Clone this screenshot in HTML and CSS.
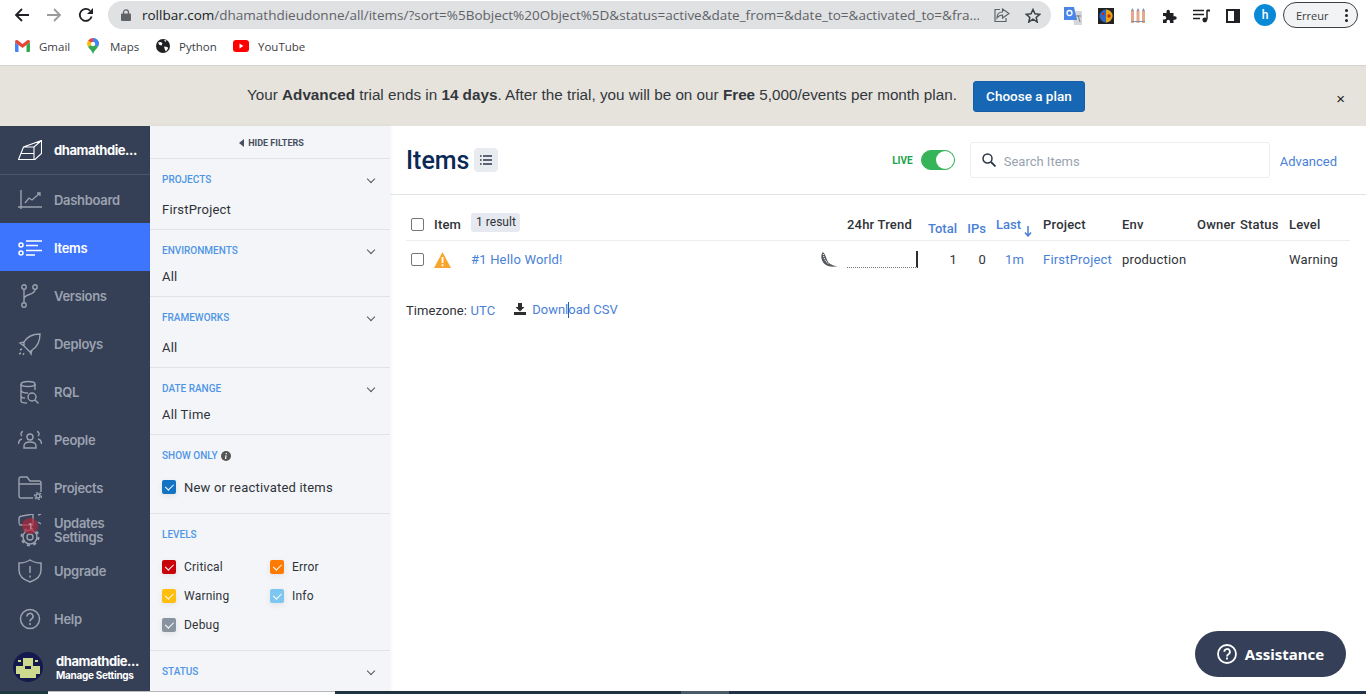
FILE: index.html
```html
<!DOCTYPE html>
<html>
<head>
    <title>Items - Rollbar</title>
    <link rel="stylesheet" href="styles.css">
</head>
<body>
    <!-- Browser toolbar -->
    <div class="toolbar">
        <svg class="nav-arrow" width="16" height="16" viewBox="0 0 16 16"><path d="M15 8H2M8 2 2 8l6 6" fill="none" stroke="#202124" stroke-width="1.8"/></svg>
        <svg class="nav-arrow" width="16" height="16" viewBox="0 0 16 16"><path d="M1 8h13M8 2l6 6-6 6" fill="none" stroke="#9a9b9d" stroke-width="1.8"/></svg>
        <svg class="nav-arrow" width="16" height="16" viewBox="0 0 16 16"><path d="M13.6 9.5A6 6 0 1 1 12 3.6" fill="none" stroke="#202124" stroke-width="1.8"/><path d="M15 1v6H9z" fill="#202124"/></svg>
        <div class="url-pill">
            <svg width="10" height="12" viewBox="0 0 10 12"><path d="M2.5 5V3.4a2.5 2.5 0 0 1 5 0V5" fill="none" stroke="#5f6368" stroke-width="1.3"/><rect y="4.5" width="10" height="7.5" rx="1" fill="#5f6368"/></svg>
            <span class="url-text"><span class="url-host">rollbar.com</span>/dhamathdieudonne/all/items/?sort=%5Bobject%20Object%5D&amp;status=active&amp;date_from=&amp;date_to=&amp;activated_to=&amp;fra...</span>
            <svg class="pill-icon" width="16" height="15" viewBox="0 0 16 15"><path d="M6 1.500H1v12h11V10M8.500 1v3C4.500 4 3 7 3 10c1.500-2 3-3 5.500-3v3L15 5.500z" fill="none" stroke="#5f6368" stroke-width="1.200"/></svg>
            <svg class="pill-icon" width="16" height="15" viewBox="0 0 16 15"><path d="m8 1.500 2 4.300 4.700.5-3.500 3.100 1 4.600L8 11.200l-4.200 2.800 1-4.600L1.300 6.300 6 5.800z" fill="none" stroke="#3c4043" stroke-width="1.500"/></svg>
        </div>
        <div class="extensions">
            <svg width="18" height="18" viewBox="0 0 18 18"><path d="M8 4h10v14H10z" fill="#d5d8da"/><path d="M0 0h10l3 13H0z" fill="#4a86e8"/><circle cx="5.500" cy="6" r="2.500" fill="none" stroke="#fff" stroke-width="1.300"/><path d="M12 9h5M14 8l2 7" stroke="#7d8083" stroke-width="1"/></svg>
            <svg width="16" height="16" viewBox="0 0 16 16"><rect width="16" height="16" fill="#222"/><circle cx="8" cy="8" r="6.500" fill="#2f66c4"/><path d="M8 1.500a6.500 6.500 0 0 1 0 13z" fill="#e8a510"/><circle cx="11" cy="8" r="1.700" fill="#c92a1c"/><circle cx="5" cy="6" r="1.200" fill="#c92a1c"/></svg>
            <svg width="16" height="16" viewBox="0 0 16 16"><path d="M1 3h3v12H1zM6.500 3h3v12h-3zM12 3h3v12h-3z" fill="#e3a98c"/><path d="M1 3l1.500-3L4 3zM6.500 3 8 0l1.500 3zM12 3l1.500-3L15 3zM1 13h14v1H1z" fill="#8490a8"/></svg>
            <svg width="15" height="15" viewBox="0 0 15 15"><path d="M1 4h3.500V2.500a1.700 1.700 0 0 1 3.400 0V4h3.600v3.300H13a1.700 1.700 0 0 1 0 3.400h-1.500V14H8v-1.500a1.700 1.700 0 0 0-3.400 0V14H1v-3.500h1.500a1.700 1.700 0 0 0 0-3.400H1z" fill="#202124"/></svg>
            <svg width="17" height="14" viewBox="0 0 17 14"><path d="M0 1.500h11M0 5.500h11M0 9.500h7" stroke="#202124" stroke-width="1.400"/><path d="M14 1v9.500" stroke="#202124" stroke-width="1.500"/><path d="M14 .5h3v2h-3z" fill="#202124"/><circle cx="11.800" cy="11" r="2.400" fill="#202124"/></svg>
            <svg width="14" height="14" viewBox="0 0 14 14"><path d="M0 0h14v14H0z" fill="#202124"/><path d="M2 2h6v10H2z" fill="#fff"/></svg>
        </div>
        <div class="profile-avatar">h</div>
        <div class="error-pill">
            <span>Erreur</span>
            <span class="error-dots"><i></i><i></i><i></i></span>
        </div>
    </div>

    <!-- Bookmarks bar -->
    <div class="bookmarks">
        <span class="bookmark bookmark-gmail">
            <svg width="15" height="12" viewBox="0 0 15 12"><path d="M0 2v9a1 1 0 0 0 1 1h2.500V5z" fill="#4285f4"/><path d="M15 2v9a1 1 0 0 1-1 1h-2.500V5z" fill="#34a853"/><path d="M0 2C0 .3 1.600-.4 3 .5l4.500 3.500 4.500-3.500c1.400-.9 3-.2 3 1.500l-3.500 3-4 3-4-3z" fill="#ea4335"/></svg>
            Gmail
        </span>
        <span class="bookmark bookmark-maps">
            <svg width="12" height="16" viewBox="0 0 12 16"><path d="M6 0a6 6 0 0 1 6 6L6 9z" fill="#4285f4"/><path d="M6 0a6 6 0 0 0-5 2.700L6 6z" fill="#ea4335"/><path d="M1 2.700A6 6 0 0 0 1 8.800L6 6z" fill="#fbbc04"/><path d="M1 8.800C2.500 11 5 13 6 16c1-3 3.500-5 5-7.200L6 6z" fill="#34a853"/><path d="M12 6c0 1-.4 2-1 2.800L6 6V0a6 6 0 0 1 6 6" fill="#4285f4"/><circle cx="6" cy="6" r="2.200" fill="#fff"/></svg>
            Maps
        </span>
        <span class="bookmark bookmark-python">
            <svg width="14" height="14" viewBox="0 0 14 14"><circle cx="7" cy="7" r="7" fill="#202124"/><path d="M2 3.500 5 3l1.500 1.500-1 2L3.500 6zM8 1l2.500.5-1 1.500zM8 7.500l3.500.5.500 1.500L10 12.500l-1-1.500z" fill="#fff"/></svg>
            Python
        </span>
        <span class="bookmark">
            <svg width="16" height="12" viewBox="0 0 16 12"><rect width="16" height="12" rx="3" fill="#f00"/><path d="m6.500 3.500 4 2.500-4 2.500z" fill="#fff"/></svg>
            YouTube
        </span>
    </div>

    <!-- Trial banner -->
    <div class="banner">
        <p class="banner-text">Your <b>Advanced</b> trial ends in <b>14 days</b>. After the trial, you will be on our <b>Free</b> 5,000/events per month plan.</p>
        <button class="plan-button">Choose a plan</button>
        <span class="banner-close">&times;</span>
    </div>

    <div class="app">
        <!-- Left navigation -->
        <nav class="sidebar">
            <div class="side-account">
                <svg class="side-icon" width="24" height="20" viewBox="0 0 24 20"><path d="M.5 19.500 5.500 7 23.500.5v13L17 19.500zM5.500 7 16 7l7.500-6.500M16 7v12.500M3 13.500h13" fill="none" stroke="#fff" stroke-width="1.100"/></svg>
                <span>dhamathdie...</span>
            </div>
            <a class="side-item">
                <svg class="side-icon" width="24" height="20" viewBox="0 0 24 20"><path d="M3 0v19M0 17h24" fill="none" stroke="currentColor" stroke-width="1.400"/><path d="M7 13l4-5 3 2 8-7M19 3h3v3" fill="none" stroke="currentColor" stroke-width="1.300"/></svg>
                <span>Dashboard</span>
            </a>
            <a class="side-item side-item-active">
                <svg class="side-icon" width="24" height="16" viewBox="0 0 24 16"><circle cx="3" cy="5" r="2" fill="none" stroke="#fff" stroke-width="1.500"/><circle cx="3" cy="13" r="2" fill="none" stroke="#fff" stroke-width="1.500"/><path d="M8 1h16M8 5.500h12M8 10.500h16M8 15h9" stroke="#fff" stroke-width="1.500"/></svg>
                <span>Items</span>
            </a>
            <a class="side-item">
                <svg class="side-icon" width="24" height="24" viewBox="0 0 24 24"><g fill="none" stroke="currentColor" stroke-width="1.400"><circle cx="6" cy="3" r="2.200"/><circle cx="17" cy="3" r="2.200"/><circle cx="6" cy="21" r="2.200"/><path d="M6 5.500v13M17 5.500c0 6-11 4-11 9.500"/></g></svg>
                <span>Versions</span>
            </a>
            <a class="side-item">
                <svg class="side-icon" width="24" height="24" viewBox="0 0 24 24"><g fill="none" stroke="currentColor" stroke-width="1.400"><path d="M6 10C9 5 15 2 22 2c0 7-3 13-8 16l-2 2-6-6zM6 10l-4 1 4 3M14 18l-1 4-1-2"/></g><path d="M1 22l2-1M5 23l1-2M2 18l2-1" stroke="currentColor" stroke-width="1.400"/></svg>
                <span>Deploys</span>
            </a>
            <a class="side-item">
                <svg class="side-icon" width="24" height="24" viewBox="0 0 24 24"><g fill="none" stroke="currentColor" stroke-width="1.400"><ellipse cx="10" cy="4" rx="7" ry="2.500"/><path d="M3 4v17c0 1 2 2 6 2M17 4v6M3 10c0 2 3 3 7 3M3 16c0 1 1.500 2 4 2"/><circle cx="14" cy="17" r="4"/><path d="m17 20 3.500 3.500"/></g></svg>
                <span>RQL</span>
            </a>
            <a class="side-item">
                <svg class="side-icon" width="24" height="20" viewBox="0 0 24 20"><g fill="none" stroke="currentColor" stroke-width="1.400"><circle cx="12" cy="7" r="3"/><path d="M6 18v-2c0-3 3-4 6-4s6 1 6 4v2z"/><path d="M5 1.500a2.500 2.500 0 0 0-1 4.500M19 1.500a2.500 2.500 0 0 1 1 4.500M4 9c-2 .5-3.500 2-3.500 5M20 9c2 .5 3.500 2 3.500 5"/></g></svg>
                <span>People</span>
            </a>
            <a class="side-item">
                <svg class="side-icon" width="24" height="24" viewBox="0 0 24 24"><g fill="none" stroke="currentColor" stroke-width="1.400"><path d="M15 22H3a2 2 0 0 1-2-2V3a2 2 0 0 1 2-2h6l3 4h9a2 2 0 0 1 2 2v9M1 8h22"/><circle cx="20" cy="20" r="2"/></g><circle cx="20" cy="20" r="3.500" fill="none" stroke="currentColor" stroke-width="1.200" stroke-dasharray="2 1.500"/></svg>
                <span>Projects</span>
            </a>
            <a class="side-item side-item-double">
                <span class="stacked-icons">
                    <svg width="24" height="12" viewBox="0 0 24 12"><path d="M1 5c0-2 1-3 3-3l11-2v11H2c-1 0-1-4-1-6zM20 1l3-1M20 8l3 2" fill="none" stroke="currentColor" stroke-width="1.400"/></svg>
                    <svg class="stacked-gear" width="20" height="20" viewBox="0 0 20 20"><circle cx="10" cy="10" r="3" fill="none" stroke="currentColor" stroke-width="1.400"/><circle cx="10" cy="10" r="7" fill="none" stroke="currentColor" stroke-width="1.500"/><circle cx="10" cy="10" r="8.500" fill="none" stroke="currentColor" stroke-width="2" stroke-dasharray="3 3.700"/></svg>
                    <span class="update-badge">1</span>
                </span>
                <span>Updates<br>Settings</span>
            </a>
            <a class="side-item">
                <svg class="side-icon" width="24" height="24" viewBox="0 0 24 24"><path d="M12 1c3 2 7 3 11 3v7c0 6-5 10-11 12C6 21 1 17 1 11V4c4 0 8-1 11-3zM12 7v7M12 16.500v2" fill="none" stroke="currentColor" stroke-width="1.500"/></svg>
                <span>Upgrade</span>
            </a>
            <a class="side-item">
                <svg class="side-icon" width="24" height="22" viewBox="0 0 24 22"><circle cx="12" cy="11" r="9.500" fill="none" stroke="currentColor" stroke-width="1.500"/><path d="M9 8.500a3 3 0 1 1 4.500 2.500c-1 .6-1.500 1-1.500 2.500M12 15v2" fill="none" stroke="currentColor" stroke-width="1.600"/></svg>
                <span>Help</span>
            </a>
            <div class="side-user">
                <svg class="user-avatar" width="30" height="30" viewBox="0 0 30 30"><circle cx="15" cy="15" r="15" fill="#141a4e"/><path d="M10 6h10v8h7v8h-4v4H7v-4H3v-8h7zM5 8h3v2H5zM22 8h3v2h-3z" fill="#cdd98d"/><path d="M12 14h6v3h-6z" fill="#141a4e"/><path d="M3 22h4v1H3zM23 22h4v1h-4z" fill="#141a4e"/></svg>
                <div>
                    <div class="user-name">dhamathdie...</div>
                    <div class="user-link">Manage Settings</div>
                </div>
            </div>
        </nav>

        <!-- Filters column -->
        <aside class="filters">
            <div class="hide-filters"><i class="hide-arrow"></i>HIDE FILTERS</div>
            <section class="filter">
                <div class="filter-title"><span>PROJECTS</span><i class="chevron"></i></div>
                <div class="filter-value filter-value-tall">FirstProject</div>
            </section>
            <section class="filter">
                <div class="filter-title"><span>ENVIRONMENTS</span><i class="chevron"></i></div>
                <div class="filter-value">All</div>
            </section>
            <section class="filter">
                <div class="filter-title"><span>FRAMEWORKS</span><i class="chevron"></i></div>
                <div class="filter-value filter-value-tall">All</div>
            </section>
            <section class="filter">
                <div class="filter-title"><span>DATE RANGE</span><i class="chevron"></i></div>
                <div class="filter-value">All Time</div>
            </section>
            <section class="filter filter-show">
                <div class="filter-title filter-title-plain">
                    <span>SHOW ONLY</span>
                    <svg width="10" height="10" viewBox="0 0 10 10"><circle cx="5" cy="5" r="5" fill="#555"/><path d="M5.300 2v1.200M5 4.300 4.600 8" stroke="#fff" stroke-width="1.200"/></svg>
                </div>
                <label class="check-row check-row-large"><i class="check check-new"></i>New or reactivated items</label>
            </section>
            <section class="filter filter-levels">
                <div class="filter-title"><span>LEVELS</span></div>
                <div class="level-grid">
                    <label class="check-row"><i class="check check-critical"></i>Critical</label>
                    <label class="check-row"><i class="check check-error"></i>Error</label>
                    <label class="check-row"><i class="check check-warning"></i>Warning</label>
                    <label class="check-row"><i class="check check-info"></i>Info</label>
                    <label class="check-row"><i class="check check-debug"></i>Debug</label>
                </div>
            </section>
            <section class="filter filter-last">
                <div class="filter-title"><span>STATUS</span><i class="chevron"></i></div>
            </section>
        </aside>

        <!-- Items list -->
        <main class="content">
            <header class="content-head">
                <h1>Items</h1>
                <span class="list-button">
                    <svg width="12" height="10" viewBox="0 0 12 10"><path d="M0 1h1.500M3 1h9M0 5h1.500M3 5h9M0 9h1.500M3 9h9" stroke="#2d3748" stroke-width="1.600"/></svg>
                </span>
                <span class="live-label">LIVE</span>
                <span class="live-toggle"><i></i></span>
                <div class="search-box">
                    <svg width="14" height="14" viewBox="0 0 14 14"><circle cx="5.500" cy="5.500" r="4.500" fill="none" stroke="#2d3748" stroke-width="1.500"/><path d="m9 9 4.500 4.500" stroke="#2d3748" stroke-width="1.800"/></svg>
                    <span class="search-text">Search Items</span>
                </div>
                <a class="advanced-link">Advanced</a>
            </header>

            <div class="table-wrap">
                <div class="table-row table-head">
                    <span class="box"></span>
                    <span class="col-item"><b>Item</b><em class="result-badge">1 result</em></span>
                    <b>24hr Trend</b>
                    <b class="sort-link num sort-low">Total</b>
                    <b class="sort-link num sort-low">IPs</b>
                    <b class="sort-link col-last">Last<svg width="8" height="11" viewBox="0 0 8 11"><path d="M4 0v9M1 6.500 4 10l3-3.500" fill="none" stroke="#4a7fd6" stroke-width="1.500"/></svg></b>
                    <b>Project</b>
                    <b>Env</b>
                    <b>Owner</b>
                    <b>Status</b>
                    <b>Level</b>
                </div>
                <div class="table-row table-body">
                    <span class="box"></span>
                    <span class="col-item">
                        <svg width="17" height="16" viewBox="0 0 17 16"><path d="M8.500 0 17 16H0z" fill="#f9a52b"/><path d="M8.500 5v6M8.500 12.300v2" stroke="#fff" stroke-width="1.800"/></svg>
                        <a class="item-title">#1 Hello World!</a>
                        <svg class="python-mark" width="18" height="15" viewBox="0 0 18 15"><path d="M3 0C0 3 1 10 6 13c3 2 8 2 12 1-5 0-9-2-11-6C6 5 5 2 3 0z" fill="#55595d"/><path d="M3.500 2c0 4 2 8 6 10" fill="none" stroke="#f2f2f2" stroke-width="1.200" stroke-dasharray="1 1"/></svg>
                    </span>
                    <span class="trend"></span>
                    <span class="num">1</span>
                    <span class="num">0</span>
                    <a class="last-seen">1m</a>
                    <a>FirstProject</a>
                    <span>production</span>
                    <span></span>
                    <span></span>
                    <span>Warning</span>
                </div>
            </div>

            <div class="table-foot">
                <span>Timezone: <a>UTC</a></span>
                <svg class="download-icon" width="12" height="12" viewBox="0 0 12 12"><path d="M4 0h4v4h2.500L6 8.500 1.500 4H4zM0 9h12v3H0z" fill="#2d2d2d"/></svg>
                <a class="download-link">Downl<i class="text-caret"></i>oad CSV</a>
            </div>
        </main>

        <button class="assist-button">
            <svg width="20" height="20" viewBox="0 0 20 20"><circle cx="10" cy="10" r="9" fill="none" stroke="#fff" stroke-width="1.800"/><path d="M7.300 7.800a2.800 2.800 0 1 1 4.200 2.400c-1 .6-1.500 1-1.500 2.200M10 13.500v2" fill="none" stroke="#fff" stroke-width="1.800"/></svg>
            Assistance
        </button>
    </div>

    <!-- Strip of the desktop showing below the window -->
    <div class="desktop-strip">
        <span class="strip-start"></span>
        <span class="strip-window"></span>
        <span class="strip-dark"></span>
        <span class="strip-light"></span>
        <span class="strip-end"></span>
    </div>
</body>
</html>
```

FILE: styles.css
```css
/* Page frame */
body {
    margin: 0;
    height: 694px;
    overflow: hidden;
    display: flex;
    flex-direction: column;
    font-family: Roboto, sans-serif;
    font-size: 13px;
    color: #2f3338;
    background-color: #fff;
}

a {
    color: #4a7fd6;
}

/* Browser toolbar */
.toolbar {
    height: 33px;
    padding-left: 14px;
    display: flex;
    align-items: flex-start;
    flex-shrink: 0;
}

.nav-arrow {
    margin: 7px 16px 0 0;
}

.url-pill {
    width: 943px;
    height: 28px;
    margin: 1px 0 0 -2px;
    padding: 0 10px 0 13px;
    box-sizing: border-box;
    display: flex;
    align-items: center;
    flex-shrink: 0;
    background-color: #dfe1e3;
    border-radius: 14px;
}

.url-text {
    margin-left: 11px;
    width: 838px;
    white-space: nowrap;
    overflow: hidden;
    font-family: "Open Sans", sans-serif;
    font-size: 13.500px;
    color: #5f6368;
}

.url-host {
    color: #202124;
}

.pill-icon {
    margin-left: 15px;
    flex-shrink: 0;
}

.extensions {
    margin: 7px 0 0 13px;
    display: flex;
    align-items: center;
    gap: 16px;
}

.profile-avatar {
    width: 22px;
    height: 22px;
    margin: 4px 7px 0 14px;
    border-radius: 50%;
    background-color: #0a8ad6;
    color: #fff;
    font-size: 12px;
    font-weight: 500;
    line-height: 22px;
    text-align: center;
}

.error-pill {
    width: 75px;
    height: 26px;
    margin-top: 2px;
    padding: 0 9px 0 12px;
    box-sizing: border-box;
    display: flex;
    align-items: center;
    justify-content: space-between;
    border: 1px solid #3c4043;
    border-radius: 13px;
    background-color: #f1f3f4;
    font-family: "Open Sans", sans-serif;
    font-size: 11px;
    color: #3c4043;
}

.error-dots i {
    display: block;
    width: 3px;
    height: 3px;
    margin: 2px 0;
    border-radius: 50%;
    background-color: #202124;
}

/* Bookmarks bar */
.bookmarks {
    height: 32px;
    box-sizing: content-box;
    padding: 0 0 0 15px;
    display: flex;
    align-items: flex-start;
    flex-shrink: 0;
    border-bottom: 1px solid #d4d3cd;
    font-family: "Open Sans", sans-serif;
    font-size: 11.500px;
    color: #3c4043;
}

.bookmark {
    height: 26px;
    display: flex;
    align-items: center;
    gap: 9px;
}

.bookmark-gmail { width: 72px; }
.bookmark-maps { width: 69px; gap: 11px; }
.bookmark-python { width: 77px; }

/* Trial banner */
.banner {
    height: 60px;
    padding: 0 21px 0 247px;
    flex-shrink: 0;
    display: flex;
    align-items: center;
    background-color: #e6e3dc;
}

.banner-text {
    margin: -3px 16px 0 0;
    font-family: "Liberation Sans", sans-serif;
    font-size: 15.250px;
    white-space: nowrap;
    color: #33373d;
}

.plan-button {
    width: 112px;
    height: 31px;
    padding: 0;
    flex-shrink: 0;
    border: 1px solid #155ea5;
    border-radius: 3px;
    background-color: #1767b4;
    color: #fff;
    font-family: Roboto, sans-serif;
    font-size: 13.500px;
    font-weight: 500;
}

.banner-close {
    margin: 5px 0 0 auto;
    font-family: "Liberation Sans", sans-serif;
    font-size: 15px;
    color: #222;
}

/* Main application area */
.app {
    position: relative;
    flex: 1;
    min-height: 0;
    display: flex;
}

/* Left navigation */
.sidebar {
    width: 150px;
    flex-shrink: 0;
    display: flex;
    flex-direction: column;
    background-color: #353f55;
    color: #9ba2b0;
    font-family: Inter, sans-serif;
    font-size: 13px;
    font-weight: 600;
    letter-spacing: -0.3px;
}

.side-account {
    height: 49px;
    flex-shrink: 0;
    box-sizing: border-box;
    display: flex;
    align-items: center;
    border-bottom: 1px solid #4a5468;
    padding-left: 18px;
    color: #fff;
    font-weight: 700;
    letter-spacing: -0.45px;
}

.side-icon {
    width: 24px;
    flex-shrink: 0;
    margin-right: 12px;
}

.side-item {
    height: 48px;
    box-sizing: border-box;
    flex-shrink: 0;
    display: flex;
    align-items: center;
    padding: 2px 0 0 18px;
    color: #9ba2b0;
}

.side-item-active {
    background-color: #3e75ff;
    color: #fff;
}

.side-item-double {
    height: 35px;
    line-height: 14px;
}

.stacked-icons {
    position: relative;
    width: 24px;
    height: 31px;
    margin-right: 12px;
    flex-shrink: 0;
}

.stacked-icons svg {
    display: block;
}

.stacked-gear {
    margin: 1px 0 0 2px;
}

.update-badge {
    position: absolute;
    top: 4px;
    left: 4px;
    width: 16px;
    height: 16px;
    border-radius: 50%;
    background-color: rgba(178, 40, 60, 0.7);
    color: rgba(255, 255, 255, 0.55);
    font-size: 8px;
    line-height: 16px;
    text-align: center;
}

.side-user {
    display: flex;
    align-items: center;
    gap: 13px;
    padding: 10px 0 0 13px;
    color: #fff;
}

.user-avatar {
    flex-shrink: 0;
}

.user-name {
    font-weight: 700;
    font-size: 13px;
    letter-spacing: -0.45px;
}

.user-link {
    font-size: 10px;
    font-weight: 700;
}

/* Filters column */
.filters {
    width: 240px;
    flex-shrink: 0;
    background-color: #f4f5f8;
    box-shadow: 1px 0 4px rgba(0, 0, 0, 0.06);
}

.hide-filters {
    height: 33px;
    box-sizing: border-box;
    padding: 1px 0 0 3px;
    display: flex;
    align-items: center;
    justify-content: center;
    border-bottom: 1px solid #e0e2e6;
    font-size: 9px;
    font-weight: 700;
    color: #48505e;
}

.hide-arrow {
    width: 0;
    height: 0;
    margin-right: 4px;
    border-top: 4px solid transparent;
    border-bottom: 4px solid transparent;
    border-right: 5px solid #48505e;
}

.filter {
    padding: 13px 14px 9px 12px;
    border-bottom: 1px solid #e0e2e6;
}

.filter-last {
    border-bottom: 0;
}

.filter-title {
    height: 15px;
    display: flex;
    align-items: center;
    justify-content: space-between;
    font-size: 10px;
    font-weight: 500;
    color: #4f95e6;
}

.filter-title-plain {
    justify-content: flex-start;
    gap: 3px;
}

.chevron {
    width: 5px;
    height: 5px;
    margin: 0 2px 2px 0;
    border-right: 1.500px solid #555;
    border-bottom: 1.500px solid #555;
    transform: rotate(45deg);
}

.filter-value {
    margin-top: 9px;
    font-size: 13px;
    line-height: 20px;
    letter-spacing: 0.2px;
}

.filter-value-tall {
    margin-top: 13px;
}

.filter-show {
    padding-bottom: 17px;
}

.filter-levels {
    padding-bottom: 16px;
}

/* Checkbox rows */
.check-row {
    display: flex;
    align-items: center;
    gap: 8px;
    height: 18px;
    font-size: 12px;
    letter-spacing: 0.2px;
}

.check-row-large {
    margin-top: 15px;
    font-size: 13px;
}

.level-grid {
    margin-top: 16px;
    display: grid;
    grid-template-columns: 108px 1fr;
    row-gap: 11px;
}

.check {
    position: relative;
    width: 14px;
    height: 14px;
    border-radius: 2px;
    box-shadow: 0 2px 6px rgba(0, 0, 0, 0.08);
}

.check::after {
    content: "";
    position: absolute;
    left: 4.500px;
    top: 2px;
    width: 3.500px;
    height: 7px;
    border-right: 1.500px solid #fff;
    border-bottom: 1.500px solid #fff;
    transform: rotate(45deg);
}

.check-new { background-color: #1273c4; }
.check-critical { background-color: #c8000a; }
.check-error { background-color: #ff7a00; }
.check-warning { background-color: #ffbe0b; }
.check-info { background-color: #7cc6ef; }
.check-debug { background-color: #8a94a0; }

/* Items list */
.content {
    flex: 1;
    min-width: 0;
}

.content-head {
    height: 69px;
    box-sizing: border-box;
    display: flex;
    align-items: center;
    padding: 0 29px 0 16px;
    border-bottom: 1px solid #e2e3e6;
}

.content-head h1 {
    margin: 0 5px 0 0;
    font-size: 25px;
    font-weight: 500;
    color: #0a2a55;
}

.list-button {
    width: 24px;
    height: 24px;
    display: flex;
    align-items: center;
    justify-content: center;
    border-radius: 4px;
    background-color: #e8ebf0;
}

.live-label {
    margin-left: auto;
    font-size: 10px;
    font-weight: 700;
    color: #1aa34a;
}

.live-toggle {
    width: 34px;
    height: 20px;
    margin: 0 15px 0 8px;
    box-sizing: border-box;
    display: flex;
    justify-content: flex-end;
    border: 1px solid #36b45a;
    border-radius: 10px;
    background-color: #36b45a;
}

.live-toggle i {
    width: 18px;
    height: 18px;
    border-radius: 50%;
    background-color: #fff;
}

.search-box {
    width: 300px;
    height: 36px;
    box-sizing: border-box;
    display: flex;
    align-items: center;
    gap: 8px;
    padding-left: 11px;
    border: 1px solid #eceef1;
    border-radius: 3px;
    color: #9aa3b0;
}

.search-text {
    padding-top: 2px;
}

.advanced-link {
    margin-left: 10px;
    padding-top: 2px;
}

/* Table rows share one set of columns */
.table-wrap {
    margin: 13px 16px 0;
}

.table-row {
    display: grid;
    grid-template-columns: 28px 413px 75px 35px 29px 57px 79px 75px 43px 49px 61px;
    align-items: center;
    letter-spacing: 0.2px;
}

.table-row b {
    font-weight: 500;
}

.table-head {
    height: 32px;
    border-bottom: 1px solid #eceef1;
}

.table-body {
    height: 37px;
}

.box {
    width: 11px;
    height: 11px;
    margin-left: 5px;
    border: 1px solid #767676;
    border-radius: 2px;
    background-color: #fff;
}

.col-item {
    display: flex;
    align-items: center;
}

.result-badge {
    margin: -3px 0 0 10px;
    padding: 0 4px 0 5px;
    height: 19px;
    line-height: 19px;
    border-radius: 3px;
    background-color: #e6e9ef;
    font-size: 12px;
    font-style: normal;
    letter-spacing: 0;
}

.item-title {
    margin-left: 20px;
    flex: 1;
}

.python-mark {
    margin-right: 9px;
}

.sort-link {
    color: #4a7fd6;
    letter-spacing: 0;
}

.num {
    text-align: right;
}

.sort-low {
    margin-top: 8px;
}

.col-last {
    padding-left: 10px;
}

.col-last svg {
    margin: 0 0 -8px 3px;
}

.last-seen {
    padding-left: 19px;
}

/* Sparkline: dotted base with one spike at the right end */
.trend {
    width: 71px;
    height: 17px;
    box-sizing: border-box;
    border-bottom: 1px dotted #777;
    border-right: 2px solid #2d2d2d;
}

.table-foot {
    margin: 21px 0 0 16px;
    padding-top: 1px;
    display: flex;
    align-items: center;
    height: 20px;
    letter-spacing: 0.1px;
}

.download-icon {
    margin: -3px 0 0 19px;
}

.download-link {
    margin-left: 6px;
    letter-spacing: 0;
}

.text-caret {
    display: inline-block;
    width: 0;
    height: 16px;
    margin-right: -1px;
    border-left: 1px solid #1a5fb4;
    vertical-align: middle;
}

/* Floating help button */
.assist-button {
    position: absolute;
    right: 20px;
    bottom: 14px;
    width: 151px;
    height: 46px;
    padding: 0;
    display: flex;
    align-items: center;
    justify-content: center;
    gap: 8px;
    border: 0;
    border-radius: 23px;
    background-color: #354058;
    color: #fff;
    font-family: "Noto Sans", sans-serif;
    font-size: 15px;
    font-weight: 700;
}

/* Desktop strip under the window */
.desktop-strip {
    height: 3px;
    flex-shrink: 0;
    display: flex;
}

.desktop-strip span { display: block; }
.strip-start { width: 48px; background-color: #1d3a3e; }
.strip-window { width: 287px; background-color: #fff; border-top: 1px solid #bdbdbd; box-sizing: border-box; }
.strip-dark { width: 346px; background-color: #1f3540; }
.strip-light { width: 48px; background-color: #4a5a66; }
.strip-end { flex: 1; background-color: #1f3245; }
```
